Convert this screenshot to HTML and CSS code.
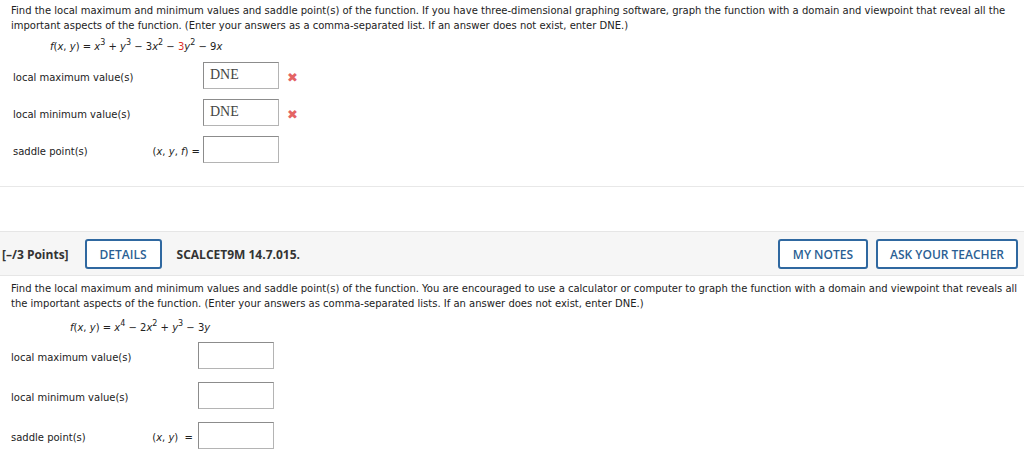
FILE: index.html
```html
<!DOCTYPE html>
<html>
<head>
<meta charset="utf-8">
<link rel="stylesheet" href="styles.css">
</head>
<body>
<div class="q1">
  <p class="prompt">Find the local maximum and minimum values and saddle point(s) of the function. If you have three-dimensional graphing software, graph the function with a domain and viewpoint that reveal all the important aspects of the function. (Enter your answers as a comma-separated list. If an answer does not exist, enter DNE.)</p>
  <div class="formula f1"><i>f</i>(<i>x</i>, <i>y</i>) = <i>x</i><sup>3</sup> + <i>y</i><sup>3</sup> &minus; 3<i>x</i><sup>2</sup> &minus; <span class="red">3</span><i>y</i><sup>2</sup> &minus; 9<i>x</i></div>
  <div class="answers a1">
    <span class="label">local maximum value(s)</span>
    <span class="prefix"></span>
    <span class="box">DNE</span>
    <span class="mark">&#10006;</span>

    <span class="label">local minimum value(s)</span>
    <span class="prefix"></span>
    <span class="box">DNE</span>
    <span class="mark">&#10006;</span>

    <span class="label">saddle point(s)</span>
    <span class="prefix">(<i>x</i>, <i>y</i>, <i>f</i>) =</span>
    <span class="box"></span>
    <span class="mark"></span>
  </div>
</div>
<div class="sep"></div>
<section class="q2">
  <div class="qhead">
    <span class="points">[&ndash;/3 Points]</span>
    <span class="btn">DETAILS</span>
    <span class="code">SCALCET9M 14.7.015.</span>
    <span class="spacer"></span>
    <span class="btn">MY NOTES</span>
    <span class="btn btn-ask">ASK YOUR TEACHER</span>
  </div>
  <div class="qbody">
    <p class="prompt">Find the local maximum and minimum values and saddle point(s) of the function. You are encouraged to use a calculator or computer to graph the function with a domain and viewpoint that reveals all the important aspects of the function. (Enter your answers as comma-separated lists. If an answer does not exist, enter DNE.)</p>
    <div class="formula f2"><i>f</i>(<i>x</i>, <i>y</i>) = <i>x</i><sup>4</sup> &minus; 2<i>x</i><sup>2</sup> + <i>y</i><sup>3</sup> &minus; 3<i>y</i></div>
    <div class="answers a2">
      <span class="label">local maximum value(s)</span>
      <span class="prefix"></span>
      <span class="box"></span>

      <span class="label">local minimum value(s)</span>
      <span class="prefix"></span>
      <span class="box"></span>

      <span class="label">saddle point(s)</span>
      <span class="prefix">(<i>x</i>, <i>y</i>) &nbsp;=</span>
      <span class="box"></span>
    </div>
  </div>
</section>
</body>
</html>
```
FILE: styles.css
```css
html, body {
  margin: 0;
  padding: 0;
  background: #fff;
}
body {
  font-family: "DejaVu Sans", Verdana, sans-serif;
  font-size: 10px;
  color: #222;
}
.prompt {
  margin: 0;
  line-height: 15px;
}
.q1 {
  padding: 3px 11px 0 11px;
}
.formula {
  line-height: 15px;
  white-space: nowrap;
}
.formula sup {
  font-size: 8px;
  line-height: 0;
  vertical-align: 5px;
}
.f1 {
  margin: 6px 0 0 39px;
}
.red {
  color: #e0302a;
}
.answers {
  display: grid;
  align-items: center;
}
.label, .prefix {
  padding-top: 3px;
}
.a1 {
  margin: 8px 0 0 2px;
  grid-template-columns: 137px 53px 76px 30px;
  row-gap: 10px;
}
.a2 {
  margin: 7px 0 0 0;
  grid-template-columns: 139px 48px 76px;
  row-gap: 13px;
}
.prefix {
  text-align: right;
  padding-right: 3px;
  white-space: nowrap;
}
.a2 .prefix {
  padding-right: 5px;
}
.box {
  box-sizing: border-box;
  height: 27px;
  width: 76px;
  border: 1px solid #b4b4b4;
  border-top-color: #8c8c8c;
  border-left-color: #8c8c8c;
  background: #fff;
  font-family: "Liberation Serif", "Times New Roman", serif;
  font-size: 14px;
  color: #444;
  padding: 4px 0 0 6px;
}
.mark {
  color: #e46464;
  font-size: 13px;
  font-weight: bold;
  padding-left: 8px;
  padding-top: 3px;
}
.sep {
  margin-top: 23px;
  border-top: 1px solid #e8e8e8;
}
.q2 {
  margin-top: 44px;
}
.qhead {
  display: flex;
  align-items: center;
  background: #f6f6f6;
  border-top: 1px solid #e6e6e6;
  border-bottom: 1px solid #e6e6e6;
  padding: 7px 6px 6px 2px;
  font-family: "Open Sans", sans-serif;
  font-size: 12px;
  color: #333;
}
.points, .code {
  font-weight: 700;
}
.btn {
  box-sizing: border-box;
  height: 30px;
  display: inline-flex;
  align-items: center;
  padding: 0 13px;
  border: 2px solid #2f68a0;
  border-radius: 3px;
  background: #fff;
  color: #2b5f94;
  font-weight: 600;
}
.btn-ask {
  padding: 0 12px;
}
.points + .btn {
  margin-left: 16px;
}
.code {
  margin-left: 15px;
}
.spacer {
  flex: 1;
}
.btn + .btn {
  margin-left: 8px;
}
.qbody {
  padding: 5px 2px 0 11px;
}
.f2 {
  margin: 9px 0 0 59px;
}
```
